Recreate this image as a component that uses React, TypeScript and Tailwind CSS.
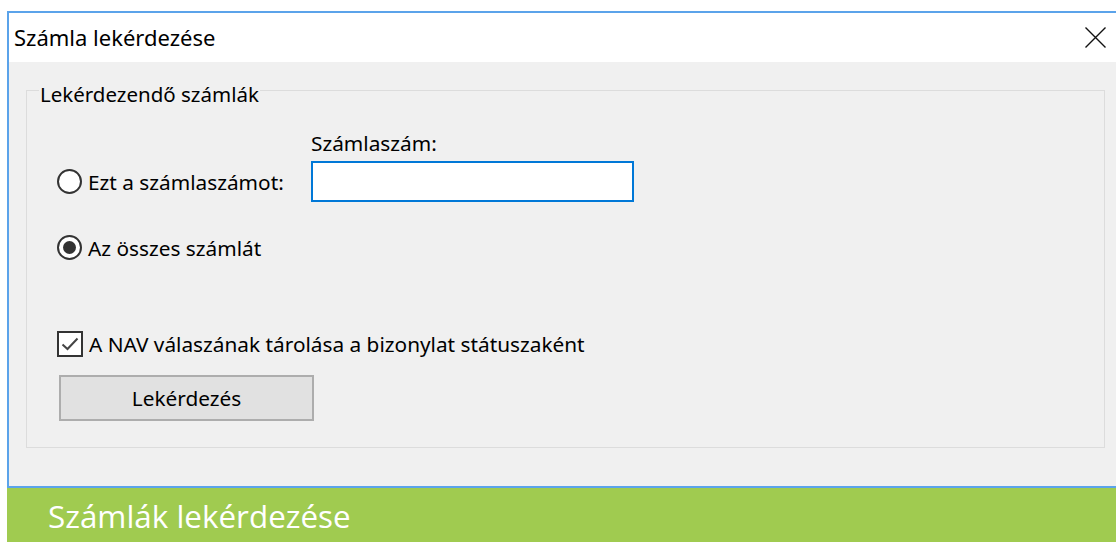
import React from 'react';

const ui = "font-['Noto_Sans',sans-serif] text-[20.8px] leading-[24px] text-black";

function Radio({ checked }: { checked?: boolean }) {
  return (
    <span className="w-[25px] h-[25px] rounded-full border-2 border-[#333] bg-white flex items-center justify-center shrink-0">
      {checked && <span className="w-[13px] h-[13px] rounded-full bg-[#333]" />}
    </span>
  );
}

function Checkbox({ checked }: { checked?: boolean }) {
  return (
    <span className="w-[26px] h-[26px] border-2 border-[#333] bg-white flex items-center justify-center shrink-0">
      {checked && (
        <svg width="18" height="14" viewBox="0 0 18 14">
          <path d="M1.5 7.5 L6.5 12 L16.5 1.5" fill="none" stroke="#444" strokeWidth="2" />
        </svg>
      )}
    </span>
  );
}

export default function App() {
  return (
    <div className="w-[1116px] h-[542px] overflow-hidden bg-white flex flex-col pt-[11px] pl-[7px]">
      {/* dialog window */}
      <div className="w-[1130px] flex flex-col border-t-2 border-l-2 border-b-2 border-[#5ba3ea]">
        <div className={`h-[49px] bg-white flex items-center pl-[5px] pr-[31px] ${ui} text-[22px]`}>
          <span className="-mt-[2px]">Számla lekérdezése</span>
          <svg className="ml-auto" width="21" height="21" viewBox="0 0 21 21">
            <path d="M0.5 0.5 L20.5 20.5 M20.5 0.5 L0.5 20.5" stroke="#111" strokeWidth="1.4" />
          </svg>
        </div>

        <div className={`h-[424px] bg-[#f0f0f0] pt-[28px] pl-[17px] ${ui}`}>
          <div className="w-[1079px] h-[358px] border border-[#dcdcdc] flex flex-col pl-[30px]">
            <span className="self-start -mt-[9px] -ml-[18px] px-[1px] bg-[#f0f0f0] text-[20.5px]">Lekérdezendő számlák</span>

            <div className="flex items-end mt-[25px]">
              <div className="w-[254px] h-[41px] flex items-center gap-[6px]">
                <Radio />
                <span>Ezt a számlaszámot:</span>
              </div>
              <div className="flex flex-col">
                <span>Számlaszám:</span>
                <div className="mt-[6px] w-[323px] h-[41px] border-2 border-[#0078d7] bg-white" />
              </div>
            </div>

            <div className="h-[25px] mt-[33px] flex items-center gap-[6px]">
              <Radio checked />
              <span>Az összes számlát</span>
            </div>

            <div className="h-[26px] mt-[71px] flex items-center gap-[6px]">
              <Checkbox checked />
              <span>A NAV válaszának tárolása a bizonylat státuszaként</span>
            </div>

            <button className="mt-[18px] ml-[2px] w-[255px] h-[46px] bg-[#e1e1e1] border-2 border-[#adadad] flex items-center justify-center">
              Lekérdezés
            </button>
          </div>
        </div>
      </div>

      <div className="h-[54px] bg-[#a0cb50] flex items-center pl-[41px]">
        <span className="font-['Open_Sans',sans-serif] text-[31.4px] text-white leading-none mt-[2px]">Számlák lekérdezése</span>
      </div>
    </div>
  );
}
